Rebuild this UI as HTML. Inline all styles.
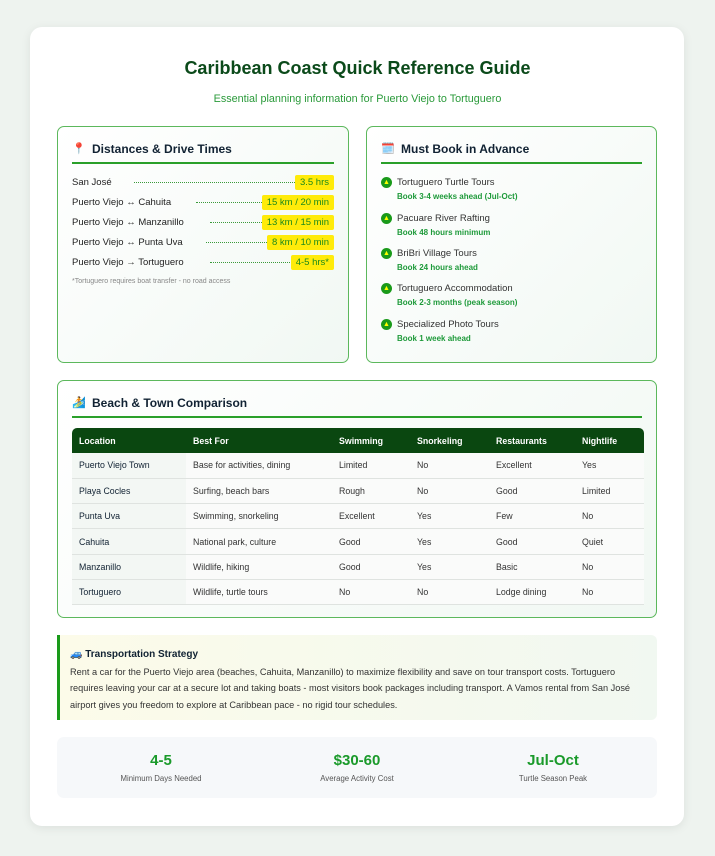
<!DOCTYPE html>
<html><head><meta charset="utf-8"><style>
*{box-sizing:border-box;margin:0;padding:0}
body{width:715px;height:856px;background:#eef3ef;font-family:"Liberation Sans",sans-serif;color:#333;position:relative}
.card{position:absolute;left:30px;top:27px;width:654px;height:799px;background:#fff;border-radius:12px;box-shadow:0 2px 10px rgba(0,0,0,.08)}
h1{position:absolute;top:58px;left:0;width:715px;text-align:center;font-size:18px;color:#0b4a1a;font-weight:bold}
.sub{position:absolute;top:93px;left:0;width:715px;text-align:center;font-size:10.8px;color:#2a9a3a}
.box{position:absolute;border:1px solid #5cb85c;border-radius:7px;background:linear-gradient(135deg,#fff,#f1f8f3)}
.box h2{position:absolute;left:14px;right:14px;top:15px;height:22px;border-bottom:2px solid #2aa02a;font-size:12px;color:#123;font-weight:bold;padding-left:20px}
.box h2 i{position:absolute;left:0;top:0;font-style:normal;font-size:11px}
.row{position:absolute;left:14px;right:14px;height:16px;font-size:9.5px;color:#222}
.row .l{position:absolute;left:0;top:2px}
.row .d{position:absolute;top:7px;border-top:1px dotted #3a9a3a}
.row .b{position:absolute;right:0;top:0;background:#ffeb0a;color:#1b8a1b;padding:2px 5px;border-radius:2px;font-size:9.5px}
.it{position:absolute;left:14px;font-size:9.5px;color:#333}
.it .c{position:absolute;left:0;top:0;width:11px;height:11px;border-radius:50%;background:#1a9a1a;color:#ff0;font-size:7px;text-align:center;line-height:11px}
.it .t{position:absolute;left:16px;top:0;white-space:nowrap}
.it .s{position:absolute;left:16px;top:15px;white-space:nowrap;font-size:8px;color:#1e9a3a;font-weight:bold}
table{position:absolute;left:14px;top:47px;width:572px;border-collapse:collapse;font-size:8.8px}
th{background:#0a4710;color:#fff;text-align:left;height:25px;padding-left:7px;font-weight:bold}
th:first-child{border-top-left-radius:5px}th:last-child{border-top-right-radius:5px}
td{height:25.3px;padding-left:7px;border-bottom:1px solid #dfe3e0;color:#333;background:#fafbfa}
td:first-child{color:#123;background:#f3f7f4}
.tr{position:absolute;left:57px;top:635px;width:600px;height:85px;border-left:3px solid #1a9a1a;background:linear-gradient(90deg,#fcfbe9,#f1f8f1);border-radius:0 6px 6px 0;font-size:9.2px;color:#333;padding:12px 10px;line-height:16.2px}
.tr b{display:block;color:#123;font-size:10px;margin-bottom:1px}
.st{position:absolute;left:57px;top:737px;width:600px;height:61px;background:#f6f8fa;border-radius:7px}
.sv{position:absolute;top:15px;width:200px;text-align:center}
.sv div:first-child{font-size:15px;color:#1a9a2a;font-weight:bold}
.sv div:last-child{font-size:7.8px;color:#555;margin-top:5px}
</style></head><body>
<div class="card"></div>
<h1>Caribbean Coast Quick Reference Guide</h1>
<div class="sub">Essential planning information for Puerto Viejo to Tortuguero</div>

<div class="box" style="left:57px;top:126px;width:292px;height:237px">
<h2><i>📍</i>Distances &amp; Drive Times</h2>
<div class="row" style="top:48px"><span class="l">San José</span><span class="d" style="left:62px;width:165px"></span><span class="b">3.5 hrs</span></div>
<div class="row" style="top:68px"><span class="l">Puerto Viejo ↔ Cahuita</span><span class="d" style="left:124px;width:70px"></span><span class="b">15 km / 20 min</span></div>
<div class="row" style="top:88px"><span class="l">Puerto Viejo ↔ Manzanillo</span><span class="d" style="left:138px;width:58px"></span><span class="b">13 km / 15 min</span></div>
<div class="row" style="top:108px"><span class="l">Puerto Viejo ↔ Punta Uva</span><span class="d" style="left:134px;width:65px"></span><span class="b">8 km / 10 min</span></div>
<div class="row" style="top:128px"><span class="l">Puerto Viejo → Tortuguero</span><span class="d" style="left:138px;width:84px"></span><span class="b">4-5 hrs*</span></div>
<div style="position:absolute;left:14px;top:151px;font-size:7px;color:#888">*Tortuguero requires boat transfer - no road access</div>
</div>

<div class="box" style="left:366px;top:126px;width:291px;height:237px">
<h2><i>🗓️</i>Must Book in Advance</h2>
<div class="it" style="top:50px"><span class="c">▲</span><span class="t">Tortuguero Turtle Tours</span><span class="s">Book 3-4 weeks ahead (Jul-Oct)</span></div>
<div class="it" style="top:86px"><span class="c">▲</span><span class="t">Pacuare River Rafting</span><span class="s">Book 48 hours minimum</span></div>
<div class="it" style="top:121px"><span class="c">▲</span><span class="t">BriBri Village Tours</span><span class="s">Book 24 hours ahead</span></div>
<div class="it" style="top:156px"><span class="c">▲</span><span class="t">Tortuguero Accommodation</span><span class="s">Book 2-3 months (peak season)</span></div>
<div class="it" style="top:192px"><span class="c">▲</span><span class="t">Specialized Photo Tours</span><span class="s">Book 1 week ahead</span></div>
</div>

<div class="box" style="left:57px;top:380px;width:600px;height:238px">
<h2><i>🏄</i>Beach &amp; Town Comparison</h2>
<table>
<tr><th style="width:114px">Location</th><th style="width:146px">Best For</th><th style="width:78px">Swimming</th><th style="width:79px">Snorkeling</th><th style="width:86px">Restaurants</th><th>Nightlife</th></tr>
<tr><td>Puerto Viejo Town</td><td>Base for activities, dining</td><td>Limited</td><td>No</td><td>Excellent</td><td>Yes</td></tr>
<tr><td>Playa Cocles</td><td>Surfing, beach bars</td><td>Rough</td><td>No</td><td>Good</td><td>Limited</td></tr>
<tr><td>Punta Uva</td><td>Swimming, snorkeling</td><td>Excellent</td><td>Yes</td><td>Few</td><td>No</td></tr>
<tr><td>Cahuita</td><td>National park, culture</td><td>Good</td><td>Yes</td><td>Good</td><td>Quiet</td></tr>
<tr><td>Manzanillo</td><td>Wildlife, hiking</td><td>Good</td><td>Yes</td><td>Basic</td><td>No</td></tr>
<tr><td>Tortuguero</td><td>Wildlife, turtle tours</td><td>No</td><td>No</td><td>Lodge dining</td><td>No</td></tr>
</table>
</div>

<div class="tr"><b>🚙 Transportation Strategy</b>Rent a car for the Puerto Viejo area (beaches, Cahuita, Manzanillo) to maximize flexibility and save on tour transport costs. Tortuguero requires leaving your car at a secure lot and taking boats - most visitors book packages including transport. A Vamos rental from San José airport gives you freedom to explore at Caribbean pace - no rigid tour schedules.</div>

<div class="st">
<div class="sv" style="left:4px"><div>4-5</div><div>Minimum Days Needed</div></div>
<div class="sv" style="left:200px"><div>$30-60</div><div>Average Activity Cost</div></div>
<div class="sv" style="left:396px"><div>Jul-Oct</div><div>Turtle Season Peak</div></div>
</div>
</body></html>
